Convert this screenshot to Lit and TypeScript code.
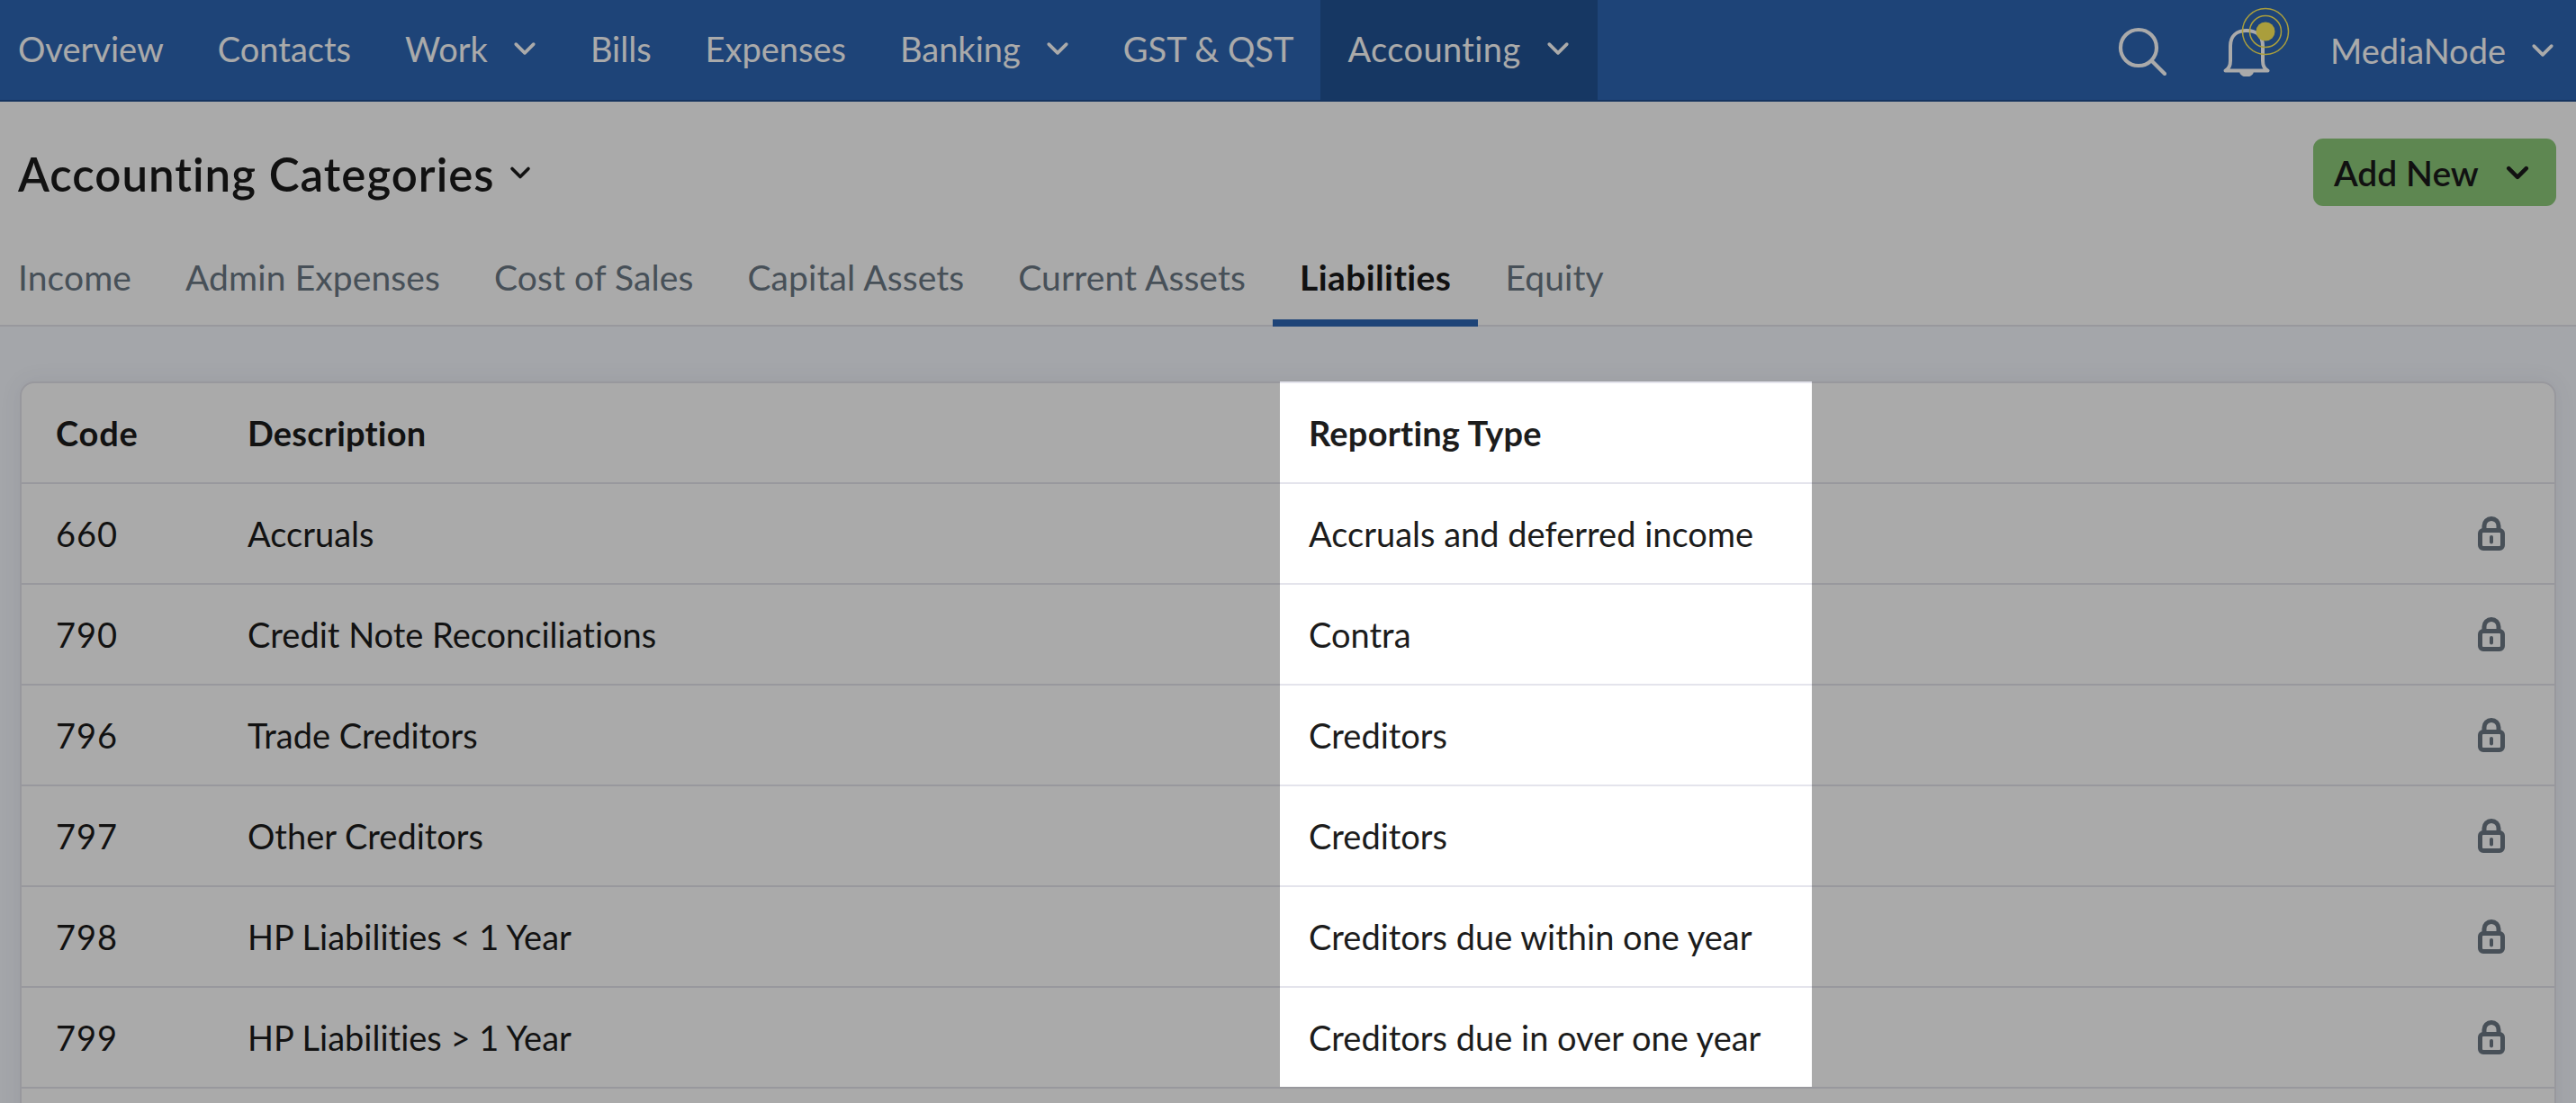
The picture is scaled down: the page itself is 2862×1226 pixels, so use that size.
import { html, css, LitElement, svg } from 'lit';
import { customElement } from 'lit/decorators.js';

const chevron = (w: number, sw: number) => html`
  <svg class="chev" width=${w} height=${w} viewBox="0 0 24 24" fill="none" stroke="currentColor"
    stroke-width=${sw} stroke-linecap="round" stroke-linejoin="round"><path d="M3 7.5 12 16.5 21 7.5" /></svg>`;

const lock = svg`<svg class="lock" width="30" height="38" viewBox="0 0 30 38" fill="none">
  <path d="M7 17V10.5a8 8 0 0 1 16 0V17" stroke="#6c7885" stroke-width="5" />
  <rect x="2.500" y="15.500" width="25" height="20" rx="3.500" stroke="#6c7885" stroke-width="5" />
  <rect x="13" y="21" width="4" height="9.500" rx="2" fill="#6c7885" />
</svg>`;

const navItems = [
  { label: 'Overview' },
  { label: 'Contacts' },
  { label: 'Work', menu: true },
  { label: 'Bills' },
  { label: 'Expenses' },
  { label: 'Banking', menu: true },
  { label: 'GST & QST' },
  { label: 'Accounting', menu: true, active: true },
];

const tabs = ['Income', 'Admin Expenses', 'Cost of Sales', 'Capital Assets', 'Current Assets', 'Liabilities', 'Equity'];

const rows = [
  ['660', 'Accruals', 'Accruals and deferred income'],
  ['790', 'Credit Note Reconciliations', 'Contra'],
  ['796', 'Trade Creditors', 'Creditors'],
  ['797', 'Other Creditors', 'Creditors'],
  ['798', 'HP Liabilities < 1 Year', 'Creditors due within one year'],
  ['799', 'HP Liabilities > 1 Year', 'Creditors due in over one year'],
  ['', '', ''],
];

@customElement('app-root')
export class AppRoot extends LitElement {
  render() {
    return html`
      <nav class="nav">
        ${navItems.map(
          (item) => html`
            <a class="nav-item ${item.active ? 'active' : ''}">
              <span>${item.label}</span>
              ${item.menu ? chevron(26, 3.4) : ''}
            </a>
          `
        )}
        <div class="nav-right">
          <svg class="search" width="54" height="54" viewBox="0 0 54 54" fill="none" stroke="#fff" stroke-width="4.2" stroke-linecap="round">
            <circle cx="23" cy="23" r="20" />
            <path d="M37.500 37.500 52 52" />
          </svg>
          <div class="bell-wrap">
            <svg class="bell" width="52" height="54" viewBox="0 0 52 54" fill="none" stroke="#fff" stroke-width="4" stroke-linejoin="round">
              <path d="M2.500 47.500c3-1.500 5.500-5 5.500-11V20C8 9 15 3 26 3s18 6 18 17v16.500c0 6 2.500 9.500 5.500 11z" />
              <path d="M20 48a6 4.500 0 0 0 12 0z" fill="#fff" />
            </svg>
            <svg class="rings" width="54" height="54" viewBox="0 0 54 54" fill="none" stroke="#ffee5a">
              <circle cx="27" cy="27" r="25.500" stroke-width="1.500" />
              <circle cx="27" cy="27" r="17.500" stroke-width="1.500" />
              <circle cx="27" cy="27" r="10.500" fill="#ffee5a" stroke="none" />
            </svg>
          </div>
          <a class="nav-user"><span>MediaNode</span>${chevron(26, 3.4)}</a>
        </div>
      </nav>

      <header class="head">
        <div class="title-row">
          <h1>Accounting Categories</h1>
          ${chevron(24, 3.6)}
          <button class="add">Add New ${chevron(26, 4.2)}</button>
        </div>
        <div class="tabs">
          ${tabs.map((t) => html`<a class="tab ${t === 'Liabilities' ? 'on' : ''}">${t}</a>`)}
        </div>
      </header>

      <main class="body">
        <section class="card">
          <div class="row header">
            <div class="code">Code</div>
            <div class="desc">Description</div>
            <div class="type">Reporting Type</div>
            <div></div>
          </div>
          ${rows.map(
            (r) => html`
              <div class="row">
                <div class="code">${r[0]}</div>
                <div class="desc">${r[1]}</div>
                ${r[2] ? html`<div class="type">${r[2]}</div>` : html`<div></div>`}
                <div class="act">${r[0] ? lock : ''}</div>
              </div>
            `
          )}
        </section>
      </main>

      <div class="dim"></div>
    `;
  }

  static styles = css`
    :host {
      display: block;
      position: relative;
      height: 1226px;
      overflow: hidden;
      background: #f6f9ff;
      font-family: 'Lato', 'Liberation Sans', sans-serif;
      font-size: 38px;
      font-variant-ligatures: none;
      color: #1c1c1c;
    }

    .dim {
      position: absolute;
      inset: 0;
      background: rgba(0, 0, 0, 0.333);
      z-index: 10;
    }

    .chev {
      display: block;
      flex: none;
    }

    .nav {
      height: 113px;
      box-sizing: border-box;
      display: flex;
      align-items: stretch;
      background: #2d66b5;
      border-bottom: 2px solid #224f8f;
      color: #fff;
      line-height: 1;
    }
    .nav-item {
      display: flex;
      align-items: center;
      gap: 28px;
      padding: 0 30px 3px;
    }
    .nav-item:first-child {
      padding-left: 20px;
      padding-right: 30px;
    }
    .nav-item.active {
      background: #225395;
      letter-spacing: 0.4px;
      padding-right: 31px;
    }
    .nav-right {
      margin-left: auto;
      display: flex;
      align-items: center;
      padding-right: 24px;
    }
    .search {
      margin-top: 2px;
    }
    .bell-wrap {
      position: relative;
      margin: 0 67px 0 63px;
      height: 54px;
    }
    .bell {
      display: block;
      margin-top: 2px;
    }
    .rings {
      position: absolute;
      left: 20px;
      top: -21px;
    }
    .nav-user {
      display: flex;
      align-items: center;
      gap: 28px;
    }

    .head {
      background: #fff;
      height: 250px;
      box-sizing: border-box;
      border-bottom: 2px solid #e4e4ec;
      display: flex;
      flex-direction: column;
    }
    .title-row {
      display: flex;
      align-items: center;
      gap: 16px;
      padding: 41px 22px 0 20px;
      height: 75px;
    }
    h1 {
      margin: 4px 0 0;
      font-size: 51px;
      font-weight: 600;
      letter-spacing: 1px;
      color: #1a1a1a;
    }
    .add {
      margin-left: auto;
      width: 270px;
      height: 75px;
      box-sizing: border-box;
      padding: 0 30px 0 23px;
      border: none;
      border-radius: 11px;
      background: #8dcb7a;
      color: #1a1a1a;
      font: inherit;
      font-size: 39px;
      font-weight: 600;
      display: flex;
      align-items: center;
      justify-content: space-between;
    }
    .tabs {
      margin-top: auto;
      display: flex;
      height: 88px;
    }
    .tab {
      padding: 0 30px 12px;
      margin-bottom: -2px;
      display: flex;
      align-items: center;
      font-size: 39px;
      letter-spacing: 0.1px;
      color: #6b7885;
      border-bottom: 8px solid transparent;
    }
    .tab:first-child {
      padding-left: 20px;
    }
    .tab.on {
      font-weight: 700;
      letter-spacing: 0.4px;
      color: #1a1a1a;
      border-bottom-color: #2d66b5;
    }

    .body {
      padding: 61px 22px 0;
    }
    .card {
      background: #fff;
      border: 2px solid #e4e4ec;
      border-radius: 16px;
      box-shadow: 0 0 24px rgba(60, 70, 100, 0.08);
    }
    .row {
      display: grid;
      grid-template-columns: 251px 1147px 591px 1fr;
      height: 112px;
      box-sizing: border-box;
      border-bottom: 2px solid #e4e4ec;
      align-items: stretch;
    }
    .row > div {
      display: flex;
      align-items: center;
    }
    .row .code {
      padding-left: 38px;
      letter-spacing: 1px;
    }
    .row.header {
      font-weight: 700;
      letter-spacing: 0.2px;
    }
    .row.header .code {
      letter-spacing: 0.8px;
    }
    .row .type {
      position: relative;
      z-index: 11;
      background: #fff;
      padding-left: 32px;
      margin-bottom: -2px;
      border-bottom: 2px solid #e4e4ec;
    }
    .row.header .type {
      margin-top: -2px;
      border-top: 2px solid #e4e4ec;
    }
    .row:nth-last-child(2) .type {
      border-bottom: none;
      margin-bottom: 0;
    }
    .act {
      justify-content: flex-end;
      padding-right: 55px;
    }
    .lock {
      display: block;
    }
  `;
}
